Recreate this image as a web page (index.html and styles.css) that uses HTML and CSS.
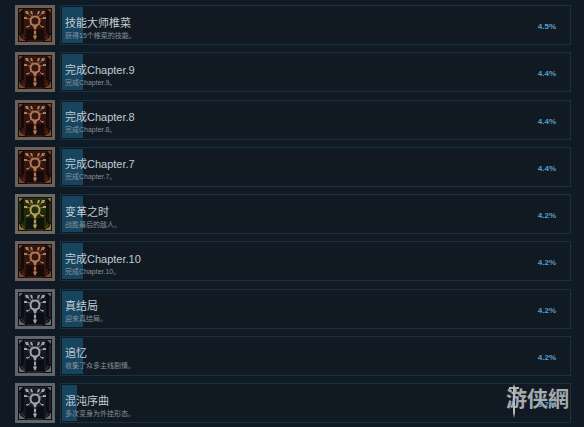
FILE: index.html
```html
<!DOCTYPE html>
<html lang="zh-CN">
<head>
    <meta charset="utf-8">
    <title>成就</title>
    <link rel="stylesheet" href="styles.css">
</head>

<body>
<!-- 成就图标，颜色由外面的class决定 -->
<svg class="defs" aria-hidden="true">
    <symbol id="staff" viewBox="0 0 40 40">
        <rect class="edge" width="40" height="40"/>
        <rect class="ground" x="3" y="3" width="34" height="34"/>
        <rect class="glow" x="7" y="6" width="26" height="28"/>
        <path class="shade" d="M11 24h7v10h-7zM22 24h7v10h-7zM7 6h2v22h-2zM31 6h2v22h-2z"/>
        <path class="trim" d="M4 36V29L6 33L11 36ZM36 36V29L34 33L29 36ZM4 4h4L4 8ZM36 4h-4L36 8Z"/>
        <path class="line" d="M5 9V28M35 9V28M9 5H31M12 36H28M6 30L10 34M34 30L30 34"/>
        <circle class="ring" cx="20" cy="16" r="4.5"/>
        <path class="ray" d="M17 12L12 8M23 12L28 8M15 14L10 13M25 14L30 13M18 11L16 8M22 11L24 8M16 19L13 22M24 19L27 22M20 21V34"/>
        <path class="tip" d="M10 6h3l1 3h-3zM30 6h-3l-1 3h3zM15 6h2l1 3h-2zM25 6h-2l-1 3h2zM9 12h3v2h-3zM28 12h3v2h-3zM11 21h4l-3 2zM29 21h-4l3 2zM18 21h4l-1 3h-2zM19 26h2v3h-2zM18 31l2-1l2 1l-2 4z"/>
    </symbol>
</svg>

<main class="list">
    <div class="row bronze">
        <svg class="icon"><use href="#staff"/></svg>
        <div class="card">
            <div class="bar"></div>
            <div class="text">
                <h3>技能大师椎菜</h3>
                <p>获得15个椎菜的技能。</p>
            </div>
            <span class="percent">4.5%</span>
        </div>
    </div>
    <div class="row bronze">
        <svg class="icon"><use href="#staff"/></svg>
        <div class="card">
            <div class="bar"></div>
            <div class="text">
                <h3>完成Chapter.9</h3>
                <p>完成Chapter.9。</p>
            </div>
            <span class="percent">4.4%</span>
        </div>
    </div>
    <div class="row bronze">
        <svg class="icon"><use href="#staff"/></svg>
        <div class="card">
            <div class="bar"></div>
            <div class="text">
                <h3>完成Chapter.8</h3>
                <p>完成Chapter.8。</p>
            </div>
            <span class="percent">4.4%</span>
        </div>
    </div>
    <div class="row bronze">
        <svg class="icon"><use href="#staff"/></svg>
        <div class="card">
            <div class="bar"></div>
            <div class="text">
                <h3>完成Chapter.7</h3>
                <p>完成Chapter.7。</p>
            </div>
            <span class="percent">4.4%</span>
        </div>
    </div>
    <div class="row gold">
        <svg class="icon"><use href="#staff"/></svg>
        <div class="card">
            <div class="bar"></div>
            <div class="text">
                <h3>变革之时</h3>
                <p>战胜最后的敌人。</p>
            </div>
            <span class="percent">4.2%</span>
        </div>
    </div>
    <div class="row bronze">
        <svg class="icon"><use href="#staff"/></svg>
        <div class="card">
            <div class="bar"></div>
            <div class="text">
                <h3>完成Chapter.10</h3>
                <p>完成Chapter.10。</p>
            </div>
            <span class="percent">4.2%</span>
        </div>
    </div>
    <div class="row silver">
        <svg class="icon"><use href="#staff"/></svg>
        <div class="card">
            <div class="bar"></div>
            <div class="text">
                <h3>真结局</h3>
                <p>迎来真结局。</p>
            </div>
            <span class="percent">4.2%</span>
        </div>
    </div>
    <div class="row silver">
        <svg class="icon"><use href="#staff"/></svg>
        <div class="card">
            <div class="bar"></div>
            <div class="text">
                <h3>追忆</h3>
                <p>收集了众多主线剧情。</p>
            </div>
            <span class="percent">4.2%</span>
        </div>
    </div>
    <div class="row silver">
        <svg class="icon"><use href="#staff"/></svg>
        <div class="card">
            <div class="bar short"></div>
            <div class="text">
                <h3>混沌序曲</h3>
                <p>多次变身为外挂形态。</p>
            </div>
            <span class="percent">3.7%</span>
            <!-- 水印 -->
            <div class="watermark">
                <svg class="sword" viewBox="0 0 10 34"><path d="M5 0L6 3H10V5H6V29L5 34L4 29V5H0V3H4Z"/></svg>
                游侠網
            </div>
        </div>
    </div>
</main>
</body>
</html>
```

FILE: styles.css
```css
* {
    margin: 0;
    padding: 0;
    box-sizing: border-box;
}

body {
    background-color: #101a24;
    font-family: "Liberation Sans", "Noto Sans CJK SC", sans-serif;
}

.defs {
    position: absolute;
    width: 0;
    height: 0;
}

/* 成就列表 */
.list {
    display: flex;
    flex-direction: column;
    justify-content: space-between;
    gap: 7px;
    min-height: 100vh;
    padding: 5px 13px 4px 15px;
}

.row {
    display: flex;
    gap: 5px;
}

.icon {
    flex: none;
    width: 40px;
    height: 40px;
}

.card {
    position: relative;
    flex: 1;
    display: flex;
    align-items: center;
    height: 40px;
    padding-right: 14px;
    border: 1px solid #18323f;
    background-color: #111a22;
}

/* 进度 */
.bar {
    position: absolute;
    top: 1px;
    bottom: 1px;
    left: 1px;
    width: 21px;
    background-color: #174560;
}

.short {
    width: 15px;
}

.text {
    position: relative;
    flex: 1;
    padding-top: 6px;
    padding-left: 4px;
}

.text h3 {
    font-size: 11px;
    font-weight: normal;
    line-height: 15px;
    color: #c3cbd1;
}

.text p {
    font-size: 7px;
    line-height: 10px;
    color: #87929c;
}

.percent {
    position: relative;
    z-index: 1;
    padding-top: 4px;
    font-size: 8px;
    font-weight: bold;
    line-height: 10px;
    color: #5d9ccc;
}

/* 右下角水印 */
.watermark {
    position: absolute;
    right: 1px;
    bottom: 8px;
    font-size: 21px;
    font-weight: bold;
    line-height: 30px;
    color: #a5abaf;
}

.sword {
    position: absolute;
    left: 3px;
    top: 0;
    width: 10px;
    height: 34px;
    fill: #b4b9bc;
}

/* 图标配色 */
.bronze {
    --edge: #6c605a;
    --ground: #160b09;
    --glow: #35150f;
    --trim: #75452c;
    --metal: #b07a58;
}

.gold {
    --edge: #6c6a62;
    --ground: #10130a;
    --glow: #222c0b;
    --trim: #8a7338;
    --metal: #b89c62;
}

.silver {
    --edge: #5f656b;
    --ground: #0b0d14;
    --glow: #151827;
    --trim: #666a71;
    --metal: #a4a4a8;
}

.edge {
    fill: var(--edge);
}

.ground {
    fill: var(--ground);
}

.glow {
    fill: var(--glow);
}

.shade {
    fill: var(--ground);
}

.trim {
    fill: var(--trim);
}

.line {
    fill: none;
    stroke: var(--trim);
    stroke-width: 1;
    opacity: 0.5;
}

.ring {
    fill: var(--glow);
    stroke: var(--metal);
    stroke-width: 2;
}

.ray {
    fill: none;
    stroke: var(--metal);
    stroke-width: 1;
    opacity: 0.7;
}

.tip {
    fill: var(--metal);
}
```
